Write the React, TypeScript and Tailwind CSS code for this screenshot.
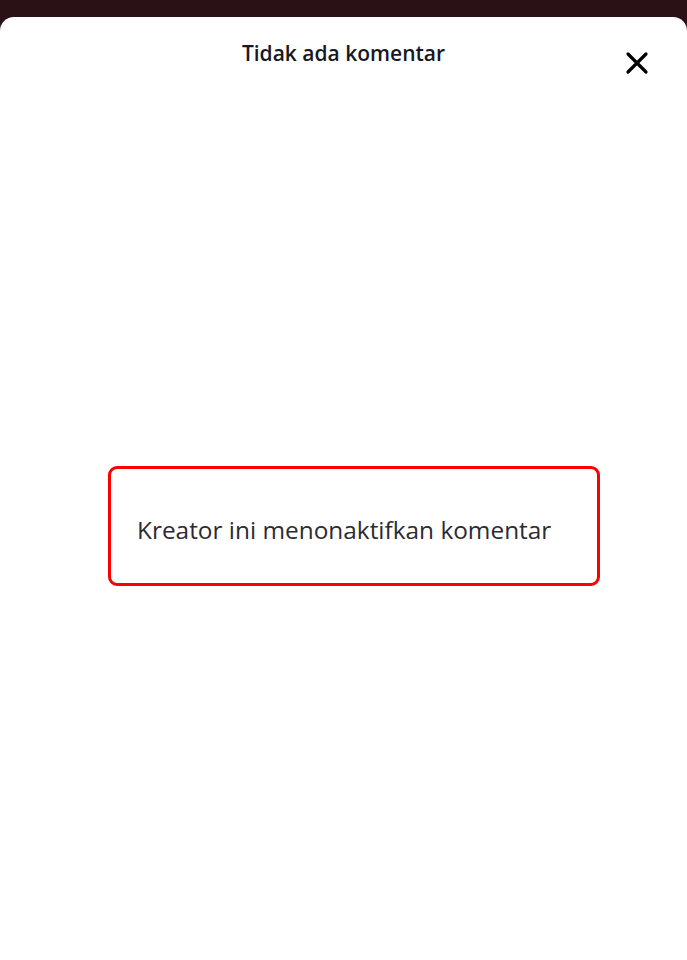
export default function App() {
  return (
    <div
      className="h-[960px] w-full bg-[#2a1115] flex flex-col overflow-hidden"
      style={{ fontFamily: '"Open Sans", "Noto Sans", sans-serif' }}
    >
      <div className="h-[17px] shrink-0" />
      <div className="flex-1 bg-white rounded-t-[14px] flex flex-col">
        <div className="relative h-[72px] flex items-start justify-center pt-[21px] shrink-0">
          <h1 className="text-[21px] leading-[30px] font-semibold text-[#161823]">
            Tidak ada komentar
          </h1>
          <button className="absolute right-[37px] top-[33px] w-[26px] h-[26px] flex items-center justify-center">
            <svg width="24" height="24" viewBox="0 0 24 24" fill="none">
              <path d="M3 3L21 21M21 3L3 21" stroke="#000" strokeWidth="3.2" strokeLinecap="round" />
            </svg>
          </button>
        </div>
        <div className="pt-[377px] pl-[108px]">
          <div className="w-[492px] h-[120px] border-[3px] border-[#ff0000] rounded-[9px] flex items-center pl-[26px] pt-[8px]">
            <p className="text-[24.4px] leading-[32px] text-[#2b2b33]">
              Kreator ini menonaktifkan komentar
            </p>
          </div>
        </div>
      </div>
    </div>
  );
}
